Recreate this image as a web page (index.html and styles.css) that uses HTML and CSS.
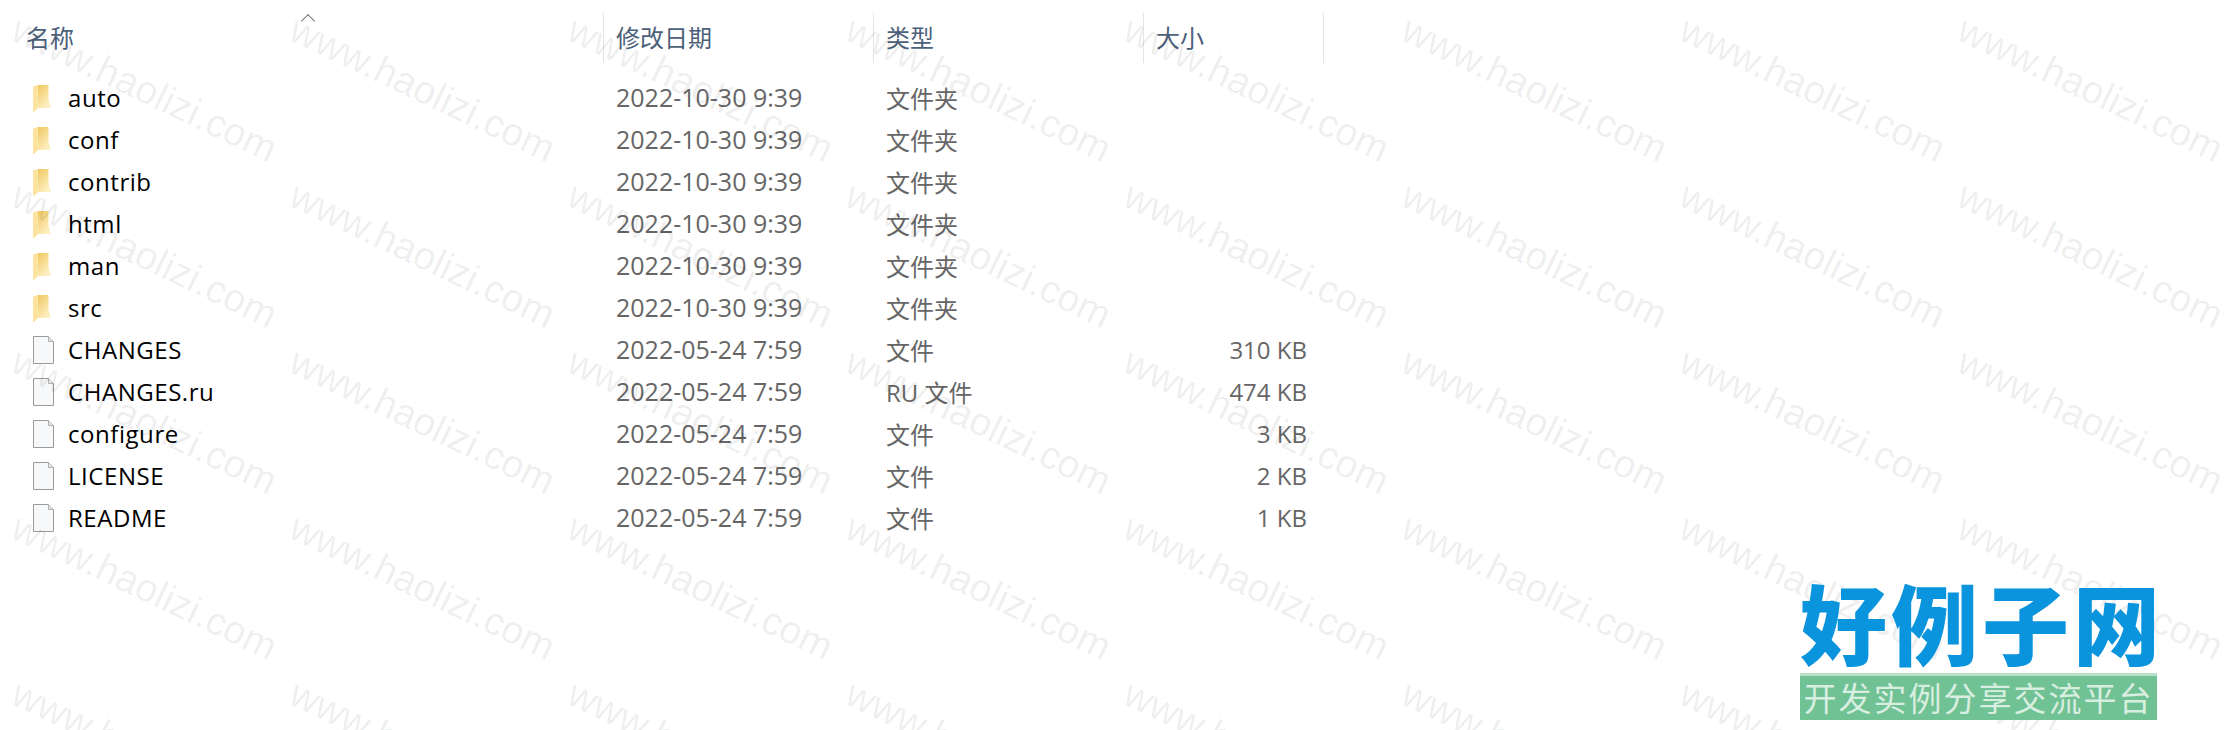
FILE: index.html
```html
<!DOCTYPE html>
<html lang="zh-CN">
<head>
  <meta charset="UTF-8" />
  <title>nginx</title>
  <link rel="stylesheet" href="styles.css">
</head>
<body>

  <div class="explorer">
    <div class="head-row">
      <div class="head-cell col-name">名称<span class="sort-arrow"></span></div>
      <div class="head-cell col-date">修改日期</div>
      <div class="head-cell col-type">类型</div>
      <div class="head-cell col-size">大小</div>
    </div>

    <div id="rows"></div>
  </div>

  <!-- Watermark and logo -->
  <div class="watermark" id="watermark"></div>
  <div class="logo">
    <div class="logo-title">好例子网</div>
    <div class="logo-sub">开发实例分享交流平台</div>
  </div>

  <script>
    const folderIcon = `<svg class="icon" width="18" height="27" viewBox="0 0 18 27"><defs><linearGradient id="fg" x1="0" y1="0" x2="0.6" y2="1"><stop offset="0" stop-color="#efc961"/><stop offset="1" stop-color="#fff0c4"/></linearGradient></defs><path d="M5 0h10.500v14.500L18 23H5z" fill="url(#fg)"/><path d="M0 1.500 5 0v23l-4 4-1-.5z" fill="#fce3a0"/></svg>`;
    const fileIcon = `<svg class="icon" width="21" height="28" viewBox="0 0 21 28"><path d="M.5.5h15l5 5v22H.5z" fill="#f7f8fa" stroke="#9a9a9a"/><path d="M15.500.5v5h5" fill="#e6e6e6" stroke="#b0b0b0"/></svg>`;

    const files = [
      ["auto", "2022-10-30 9:39", "文件夹", ""],
      ["conf", "2022-10-30 9:39", "文件夹", ""],
      ["contrib", "2022-10-30 9:39", "文件夹", ""],
      ["html", "2022-10-30 9:39", "文件夹", ""],
      ["man", "2022-10-30 9:39", "文件夹", ""],
      ["src", "2022-10-30 9:39", "文件夹", ""],
      ["CHANGES", "2022-05-24 7:59", "文件", "310 KB"],
      ["CHANGES.ru", "2022-05-24 7:59", "RU 文件", "474 KB"],
      ["configure", "2022-05-24 7:59", "文件", "3 KB"],
      ["LICENSE", "2022-05-24 7:59", "文件", "2 KB"],
      ["README", "2022-05-24 7:59", "文件", "1 KB"]
    ];

    let output = "";
    files.forEach(f => {
      output += `
        <div class="row">
          <div class="cell col-name"><span class="icon-box">${f[3] ? fileIcon : folderIcon}</span>${f[0]}</div>
          <div class="cell col-date">${f[1]}</div>
          <div class="cell col-type">${f[2]}</div>
          <div class="cell col-size">${f[3]}</div>
        </div>`;
    });
    document.getElementById('rows').innerHTML = output;

    // watermark repeats across the whole page
    let marks = "";
    for (let i = 0; i < 40; i++) {
      marks += `<span class="mark">www.haolizi.com</span>`;
    }
    document.getElementById('watermark').innerHTML = marks;
  </script>

</body>
</html>
```

FILE: styles.css
```css
html {
  overflow: hidden;
}
body {
  margin: 0;
  width: 2228px;
  height: 730px;
  overflow: hidden;
  position: relative;
  background: #fff;
  font-family: "Open Sans", "Noto Sans CJK SC", sans-serif;
}

.explorer {
  padding-top: 13px;
}

.head-row {
  display: flex;
  height: 50px;
  margin-bottom: 13px;
}
.head-cell {
  box-sizing: border-box;
  height: 50px;
  padding: 7px 0 0 12px;
  font-size: 24px;
  line-height: 34px;
  color: #4c607a;
  border-right: 1px solid #e5e5e5;
  font-family: "Noto Sans CJK SC", sans-serif;
  position: relative;
}
.col-name { width: 604px; padding-left: 26px; }
.col-date { width: 270px; padding-left: 12px; }
.col-type { width: 270px; padding-left: 12px; }
.col-size { width: 180px; padding-left: 12px; }

.sort-arrow {
  position: absolute;
  left: 303px;
  top: 3px;
  width: 9px;
  height: 9px;
  border-top: 1px solid #777;
  border-left: 1px solid #777;
  transform: rotate(45deg);
}

.row {
  display: flex;
  height: 42px;
  align-items: center;
  font-size: 24px;
}
.cell {
  box-sizing: border-box;
  white-space: nowrap;
  color: #666;
}
.row .col-name {
  display: flex;
  align-items: center;
  color: #000;
  padding-left: 33px;
  letter-spacing: 0.55px;
}
.icon-box {
  width: 35px;
  display: flex;
  margin-top: 2px;
}
.row .col-date {
  font-size: 25px;
}
.row .col-size {
  width: 163px;
  text-align: right;
  padding: 0;
}

/* Watermark */
.watermark {
  position: absolute;
  left: 0;
  top: 0;
  width: 2228px;
  height: 730px;
  overflow: hidden;
  box-sizing: border-box;
  padding: 9px 0 0 23px;
  display: grid;
  grid-template-columns: repeat(8, 278px);
  grid-auto-rows: 166px;
  pointer-events: none;
}
.mark {
  font-family: "Liberation Sans", sans-serif;
  font-size: 39px;
  line-height: 40px;
  color: rgba(0,0,0,0.07);
  white-space: nowrap;
  transform: rotate(25.5deg);
  transform-origin: 0 0;
}

/* Logo */
.logo {
  position: absolute;
  left: 1800px;
  top: 572px;
  width: 357px;
}
.logo-title {
  font-family: "Noto Sans CJK SC", sans-serif;
  font-weight: 900;
  font-size: 87px;
  line-height: 98px;
  margin-bottom: 3px;
  color: #0a94de;
  text-align: center;
  letter-spacing: 4px;
  white-space: nowrap;
}
.logo-sub {
  height: 47px;
  background: #70c193;
  border-top: 3px solid #b8e0c8;
  box-sizing: border-box;
  color: #d8eee0;
  font-family: "Noto Sans CJK SC", sans-serif;
  font-size: 33px;
  line-height: 42px;
  text-align: center;
  white-space: nowrap;
  letter-spacing: 2px;
}
```
